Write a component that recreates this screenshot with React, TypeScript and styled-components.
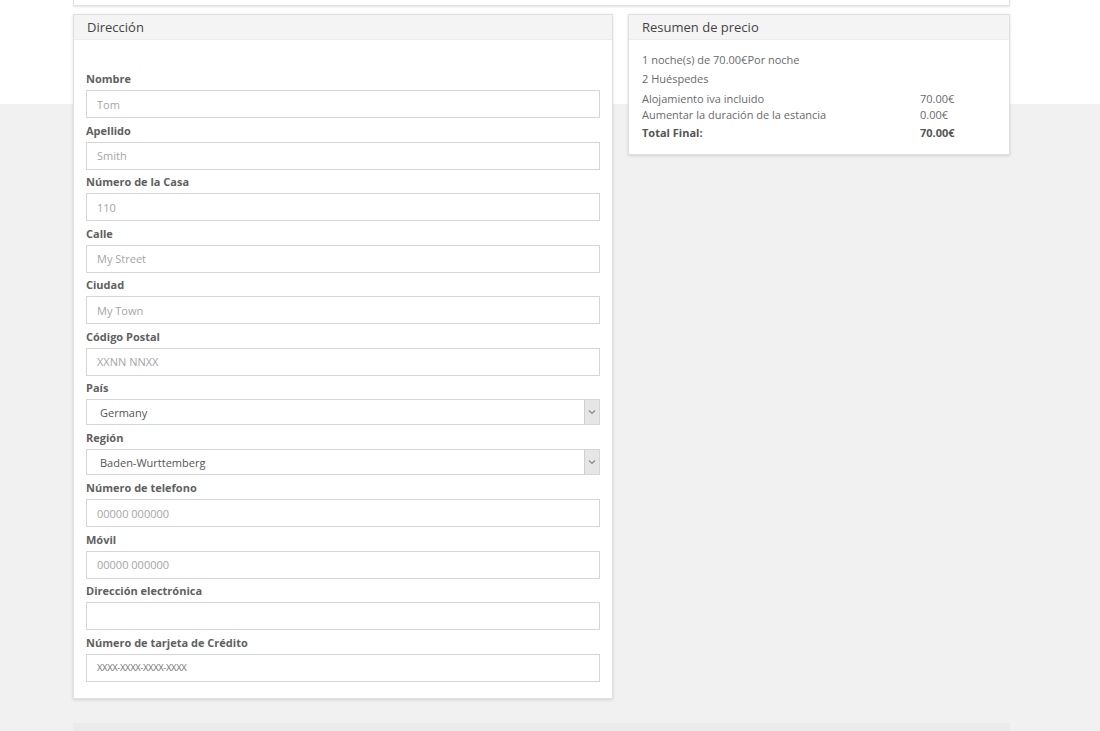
import React from "react";
import styled, { createGlobalStyle } from "styled-components";

const GlobalStyle = createGlobalStyle`
  html, body {
    margin: 0;
    padding: 0;
  }
  body {
    font-family: "Open Sans", "Liberation Sans", Arial, sans-serif;
    color: #555;
    background: linear-gradient(#ffffff 0, #ffffff 104px, #f1f1f1 104px);
    min-height: 731px;
    overflow: hidden;
  }
`;

const Page = styled.div`
  width: 937px;
  margin-left: 73px;
  display: flex;
  flex-direction: column;
`;

const TopStrip = styled.div`
  height: 5px;
  background: #fff;
  border: 1px solid #e2e2e2;
  border-top: none;
  box-shadow: 0 1px 2px rgba(0, 0, 0, 0.12);
`;

const Columns = styled.div`
  display: grid;
  grid-template-columns: 540px 382px;
  column-gap: 15px;
  align-items: start;
  margin-top: 8px;
`;

const Panel = styled.section`
  background: #fff;
  border: 1px solid #e0e0e0;
  box-shadow: 0 1px 3px rgba(0, 0, 0, 0.13);
`;

const PanelHeading = styled.h3`
  margin: 0;
  height: 24px;
  line-height: 25px;
  padding: 0 13px;
  background: #f4f4f4;
  border-bottom: 1px solid #ececec;
  font-size: 13px;
  font-weight: 400;
  color: #444;
`;

const FormBody = styled.form`
  padding: 31px 12px 16px;
  display: flex;
  flex-direction: column;
`;

const Field = styled.div<{ $select?: boolean }>`
  display: flex;
  flex-direction: column;
  margin-bottom: ${(p) => (p.$select ? "5px" : "4.5px")};
  &:last-child {
    margin-bottom: 0;
  }
`;

const Label = styled.label`
  font-size: 11px;
  font-weight: 700;
  color: #606060;
  line-height: 16px;
  margin-bottom: 3px;
`;

const TextInput = styled.input<{ $small?: boolean }>`
  box-sizing: border-box;
  height: 28px;
  border: 1px solid #d6d6d6;
  padding: 0 10px;
  font-family: "Open Sans", "Liberation Sans", Arial, sans-serif;
  font-size: ${(p) => (p.$small ? "9.5px" : "11px")};
  letter-spacing: ${(p) => (p.$small ? "-0.4px" : "0")};
  color: #555;
  outline: none;
  &::placeholder {
    color: ${(p) => (p.$small ? "#777" : "#a5a5a5")};
  }
`;

const SelectBox = styled.div`
  box-sizing: border-box;
  height: 26px;
  border: 1px solid #d6d6d6;
  display: flex;
  align-items: stretch;
`;

const SelectValue = styled.span`
  flex: 1;
  display: flex;
  align-items: center;
  padding-left: 13px;
  font-size: 11px;
  color: #555;
`;

const SelectArrow = styled.span`
  width: 14px;
  background: #e6e6e6;
  border-left: 1px solid #cfcfcf;
  display: flex;
  align-items: center;
  justify-content: center;
`;

const SummaryBody = styled.div`
  padding: 12px 13px 14px;
  font-size: 11px;
  color: #6a6a6a;
`;

const Line = styled.p`
  margin: 0 0 4px;
  line-height: 15px;
`;

const PriceTable = styled.div`
  display: grid;
  grid-template-columns: 278px auto;
  margin-top: 5px;
  row-gap: 1px;
`;

const Cell = styled.span<{ $bold?: boolean; $gap?: boolean }>`
  line-height: 15px;
  font-weight: ${(p) => (p.$bold ? 700 : 400)};
  color: ${(p) => (p.$bold ? "#555" : "#6a6a6a")};
  margin-top: ${(p) => (p.$gap ? "2px" : "0")};
`;

const BottomStrip = styled.div`
  margin-top: 24px;
  height: 20px;
  background: #ebebeb;
`;

type FieldDef = { label: string; placeholder?: string; select?: string; small?: boolean };

const fields: FieldDef[] = [
  { label: "Nombre", placeholder: "Tom" },
  { label: "Apellido", placeholder: "Smith" },
  { label: "Número de la Casa", placeholder: "110" },
  { label: "Calle", placeholder: "My Street" },
  { label: "Ciudad", placeholder: "My Town" },
  { label: "Código Postal", placeholder: "XXNN NNXX" },
  { label: "País", select: "Germany" },
  { label: "Región", select: "Baden-Wurttemberg" },
  { label: "Número de telefono", placeholder: "00000 000000" },
  { label: "Móvil", placeholder: "00000 000000" },
  { label: "Dirección electrónica", placeholder: "" },
  { label: "Número de tarjeta de Crédito", placeholder: "XXXX-XXXX-XXXX-XXXX", small: true },
];

const Chevron = () => (
  <svg width="8" height="6" viewBox="0 0 8 6">
    <path d="M1 1.5 L4 4.5 L7 1.5" fill="none" stroke="#888" strokeWidth="1.1" />
  </svg>
);

const App = () => {
  return (
    <>
      <GlobalStyle />
      <Page>
        <TopStrip />
        <Columns>
          <Panel>
            <PanelHeading>Dirección</PanelHeading>
            <FormBody>
              {fields.map((f) => (
                <Field key={f.label} $select={!!f.select}>
                  <Label>{f.label}</Label>
                  {f.select ? (
                    <SelectBox>
                      <SelectValue>{f.select}</SelectValue>
                      <SelectArrow>
                        <Chevron />
                      </SelectArrow>
                    </SelectBox>
                  ) : (
                    <TextInput placeholder={f.placeholder} $small={f.small} />
                  )}
                </Field>
              ))}
            </FormBody>
          </Panel>
          <Panel>
            <PanelHeading>Resumen de precio</PanelHeading>
            <SummaryBody>
              <Line>1 noche(s) de 70.00€Por noche</Line>
              <Line>2 Huéspedes</Line>
              <PriceTable>
                <Cell>Alojamiento iva incluido</Cell>
                <Cell>70.00€</Cell>
                <Cell>Aumentar la duración de la estancia</Cell>
                <Cell>0.00€</Cell>
                <Cell $bold $gap>Total Final:</Cell>
                <Cell $bold $gap>70.00€</Cell>
              </PriceTable>
            </SummaryBody>
          </Panel>
        </Columns>
        <BottomStrip />
      </Page>
    </>
  );
};

export default App;
